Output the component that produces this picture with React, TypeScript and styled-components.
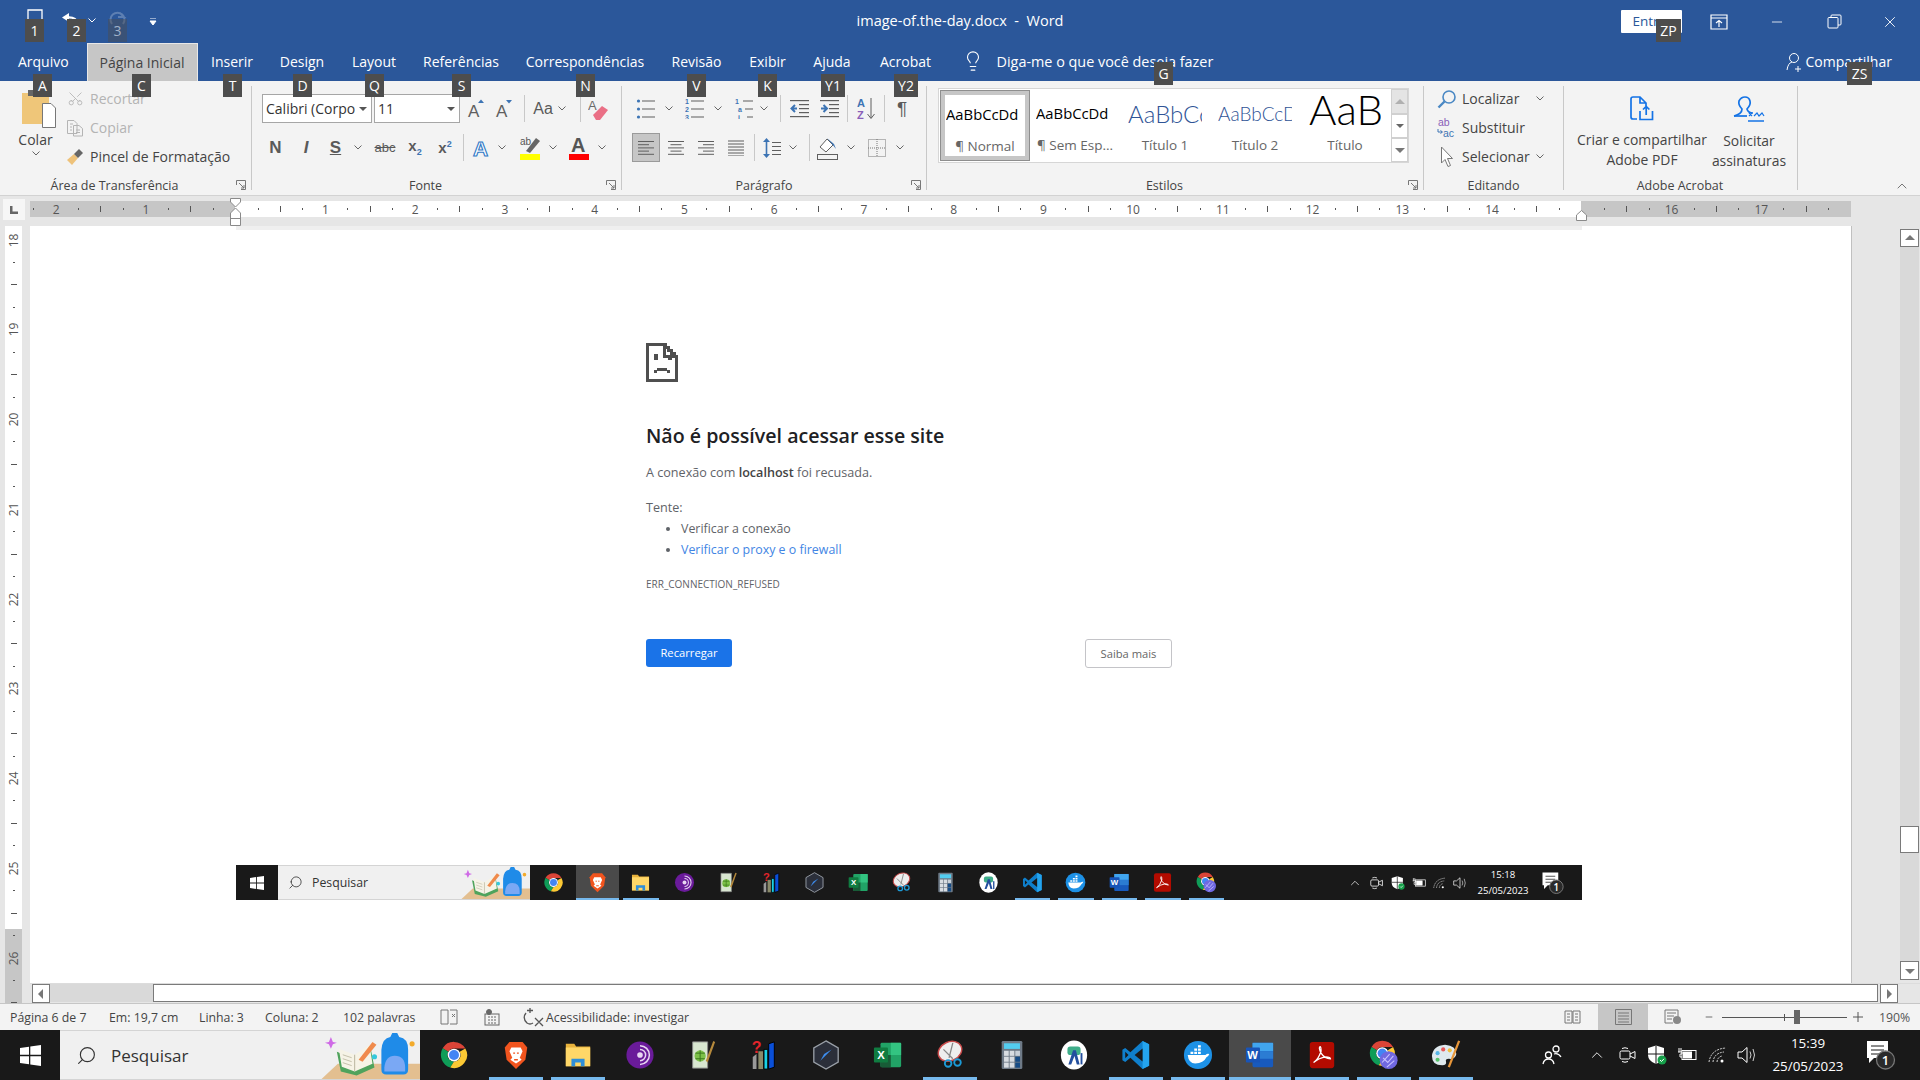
import React from 'react';
import styled, { createGlobalStyle } from 'styled-components';
import { Scissors, Lightbulb, Search, X, Minus, ChevronUp } from 'lucide-react';

const UI = '"Open Sans", "Noto Sans", "Liberation Sans", sans-serif';

const GlobalStyle = createGlobalStyle`
  html, body { margin: 0; padding: 0; width: 1920px; height: 1080px; overflow: hidden; background: #fff; }
  * { box-sizing: border-box; }
`;

const Window = styled.div`
  position: relative;
  width: 1920px;
  height: 1080px;
  display: flex;
  flex-direction: column;
  font-family: ${UI};
  color: #444;
  overflow: hidden;
`;

const TitleBar = styled.header`
  height: 43px;
  flex: none;
  background: #2b579a;
  display: grid;
  grid-template-columns: 1fr auto 1fr;
  align-items: center;
  color: #fff;
`;

const TitleText = styled.div`
  font-size: 14.5px;
  white-space: pre;
  margin-top: -2px;
`;

const BarSide = styled.div`
  display: flex;
  align-items: center;
  height: 100%;
`;

const QatIcon = styled.div<{ $lift: number }>`
  display: flex;
  margin-top: -${({ $lift }) => $lift}px;
`;

const EnterButton = styled.div`
  width: 61px;
  height: 23px;
  background: #fff;
  border-radius: 1px;
  color: #2b579a;
  font-size: 13.5px;
  padding-left: 11px;
  line-height: 23px;
`;

const TabsRow = styled.nav`
  height: 38px;
  flex: none;
  background: #2b579a;
  display: flex;
  align-items: stretch;
`;

const Tab = styled.div<{ $active?: boolean; $w: number }>`
  width: ${({ $w }) => $w}px;
  flex: none;
  display: flex;
  align-items: center;
  justify-content: center;
  font-size: 14px;
  padding-bottom: 1px;
  color: ${({ $active }) => ($active ? '#444' : '#fff')};
  background: ${({ $active }) => ($active ? '#c6c6c6' : 'transparent')};
  border: ${({ $active }) => ($active ? '1px solid #e8e8e8' : 'none')};
  border-bottom: none;
`;

const HelpBox = styled.div`
  display: flex;
  align-items: center;
  color: #fff;
  font-size: 14.4px;
  margin-left: 14px;
  gap: 13px;
  width: 760px;
  padding-bottom: 2px;
`;

const ShareBox = styled.div`
  display: flex;
  align-items: center;
  gap: 3px;
  color: #fff;
  font-size: 14px;
  margin-left: 64px;
  padding-bottom: 1px;
`;

const Ribbon = styled.section`
  height: 115px;
  flex: none;
  background: #f3f3f3;
  border-bottom: 1px solid #d2d2d2;
  display: flex;
  padding: 5px 0 0;
  position: relative;
`;

const Group = styled.div<{ $w: number; $plain?: boolean }>`
  width: ${({ $w }) => $w}px;
  flex: none;
  height: 104px;
  position: relative;
  border-right: ${({ $plain }) => ($plain ? 'none' : '1px solid #c8c8c8')};
`;

const GroupLabel = styled.div<{ $shift?: number }>`
  position: absolute;
  left: ${({ $shift }) => $shift ?? 0}px;
  right: 0;
  top: 92px;
  height: 16px;
  line-height: 16px;
  text-align: center;
  font-size: 12.5px;
  color: #444;
  white-space: nowrap;
`;

const Launcher = styled.svg`
  position: absolute;
  right: 5px;
  top: 94px;
`;

const ToolRow = styled.div<{ $top?: number }>`
  display: flex;
  align-items: center;
  height: 29px;
  margin-top: ${({ $top }) => $top ?? 0}px;
`;

const Slot = styled.div`
  flex: none;
  display: flex;
  align-items: center;
  justify-content: center;
  white-space: nowrap;
`;

const Sep = styled.div`
  width: 1px;
  height: 27px;
  background: #c8c8c8;
`;

const Glyph = styled.span<{ $size?: number; $bold?: boolean; $italic?: boolean; $under?: boolean; $strike?: boolean; $color?: string }>`
  font-family: "Liberation Sans", sans-serif;
  font-size: ${({ $size }) => $size ?? 16}px;
  font-weight: ${({ $bold }) => ($bold ? 700 : 400)};
  font-style: ${({ $italic }) => ($italic ? 'italic' : 'normal')};
  text-decoration: ${({ $under, $strike }) => ($under ? 'underline' : $strike ? 'line-through' : 'none')};
  color: ${({ $color }) => $color ?? '#5a5a5a'};
  line-height: 1;
`;

const SubMark = styled.sub`
  font-size: 9px;
  color: #3d74b4;
`;

const SupMark = styled.sup`
  font-size: 9px;
  color: #3d74b4;
`;

const ComboBox = styled.div<{ $w: number }>`
  width: 100%;
  height: 29px;
  background: #fff;
  border: 1px solid #a6a6a6;
  font-size: 14px;
  color: #333;
  padding: 0 4px 0 3px;
  display: flex;
  align-items: center;
  justify-content: space-between;
  overflow: hidden;
  span { overflow: hidden; width: ${({ $w }) => $w}px; white-space: nowrap; }
`;

const ActiveAlign = styled.div`
  width: 28px;
  height: 29px;
  background: #c6c6c6;
  border: 1px solid #9a9a9a;
  display: flex;
  align-items: center;
  justify-content: center;
`;

const SideRow = styled.div<{ $muted?: boolean }>`
  display: flex;
  align-items: center;
  height: 29px;
  gap: 5px;
  font-size: 14px;
  white-space: nowrap;
  color: ${({ $muted }) => ($muted ? '#b4b4b4' : '#444')};
`;

const IconCell = styled.div`
  width: 20px;
  display: flex;
  justify-content: center;
`;

const RotatedScissors = styled(Scissors)`
  transform: rotate(-90deg);
`;

const SideColumn = styled.div<{ $left: number }>`
  margin-left: ${({ $left }) => $left}px;
  margin-top: -2px;
`;

const PasteColumn = styled.div`
  width: 71px;
  margin-right: -6px;
  display: flex;
  flex-direction: column;
  align-items: center;
  font-size: 14px;
  padding-top: 3px;
  gap: 2px;
`;

const PasteArt = styled.div`
  display: flex;
  margin-left: 6px;
`;

const ClipboardBody = styled.div`
  display: flex;
`;

const SideText = styled.span<{ $w?: number }>`
  display: inline-block;
  width: ${({ $w }) => ($w ? `${$w}px` : 'auto')};
`;

const Gallery = styled.div`
  position: absolute;
  left: 11px;
  top: 2px;
  width: 471px;
  height: 75px;
  background: #fff;
  border: 1px solid #d6d6d6;
  display: flex;
  padding: 1px;
`;

const StyleItem = styled.div<{ $selected?: boolean }>`
  width: 90px;
  height: 71px;
  flex: none;
  display: flex;
  flex-direction: column;
  align-items: center;
  overflow: hidden;
  border: ${({ $selected }) => ($selected ? '1px solid #8e8e8e' : 'none')};
  outline: ${({ $selected }) => ($selected ? '4px solid #c6c6c6' : 'none')};
  outline-offset: -5px;
`;

const StylePreview = styled.div<{ $size: number; $color?: string; $light?: boolean; $w: number; $lift?: number }>`
  height: 46px;
  width: ${({ $w }) => $w}px;
  overflow: hidden;
  display: flex;
  align-items: center;
  white-space: nowrap;
  padding-bottom: ${({ $lift }) => $lift ?? 0}px;
  font-family: ${({ $light }) => ($light ? '"Lato", sans-serif' : '"Open Sans", sans-serif')};
  font-weight: ${({ $light }) => ($light ? 300 : 400)};
  font-size: ${({ $size }) => $size}px;
  color: ${({ $color }) => $color ?? '#000'};
`;

const StyleName = styled.div`
  font-size: 13.5px;
  line-height: 18px;
  color: #666;
  white-space: nowrap;
`;

const GalleryScroll = styled.div`
  margin-left: auto;
  width: 17px;
  display: flex;
  flex-direction: column;
  margin-top: -1px;
  margin-bottom: -1px;
  margin-right: -1px;
`;

const GalleryButton = styled.div<{ $h: number; $shade?: boolean }>`
  height: ${({ $h }) => $h}px;
  background: ${({ $shade }) => ($shade ? '#e4e4e4' : '#fff')};
  border: 1px solid #d0d0d0;
  display: flex;
  align-items: center;
  justify-content: center;
`;

const AcrobatBody = styled.div`
  display: flex;
`;

const AcrobatButton = styled.div<{ $w: number }>`
  width: ${({ $w }) => $w}px;
  flex: none;
  display: flex;
  flex-direction: column;
  align-items: center;
  padding-top: 10px;
  font-size: 13.9px;
  line-height: 20px;
  text-align: center;
  white-space: nowrap;
`;

const AcrobatLines = styled.div`
  margin-top: 9px;
`;

const Collapse = styled.div`
  position: absolute;
  right: 10px;
  bottom: 1px;
  color: #555;
  display: flex;
`;

const RulerRow = styled.div`
  height: 30px;
  flex: none;
  background: #e6e6e6;
  display: flex;
  padding-top: 5px;
  position: relative;
`;

const TabStop = styled.div`
  width: 22px;
  height: 21px;
  margin: -2px 5px 0 3px;
  background: #f6f6f6;
  display: flex;
  align-items: center;
  justify-content: center;
`;

const HRuler = styled.div`
  width: 1821px;
  height: 16px;
  overflow: hidden;
  display: flex;
  background: linear-gradient(to right, #c6c6c6 205px, #fff 205px, #fff 1551px, #c6c6c6 1551px);
`;

const RulerStrip = styled.div<{ $vertical?: boolean }>`
  display: flex;
  flex-direction: ${({ $vertical }) => ($vertical ? 'column' : 'row')};
  margin-left: ${({ $vertical }) => ($vertical ? 0 : -7.6)}px;
  margin-top: ${({ $vertical }) => ($vertical ? 2.8 : 0)}px;
`;

const RulerSlot = styled.div<{ $vertical?: boolean }>`
  flex: none;
  width: ${({ $vertical }) => ($vertical ? '17px' : '22.44px')};
  height: ${({ $vertical }) => ($vertical ? '22.44px' : '16px')};
  display: flex;
  align-items: center;
  justify-content: center;
  font-size: 12px;
  color: #555;
  font-family: "Open Sans", sans-serif;
`;

const RulerNumber = styled.span<{ $vertical?: boolean }>`
  display: inline-block;
  transform: ${({ $vertical }) => ($vertical ? 'rotate(-90deg)' : 'none')};
  white-space: nowrap;
`;

const RulerMark = styled.i<{ $long?: boolean; $vertical?: boolean }>`
  display: block;
  background: #555;
  width: ${({ $long, $vertical }) => ($vertical ? ($long ? 6 : 2) : 1)}px;
  height: ${({ $long, $vertical }) => ($vertical ? 1 : $long ? 6 : 2)}px;
`;

const MarginMarker = styled.svg<{ $left: number; $top: number }>`
  position: absolute;
  left: ${({ $left }) => $left}px;
  top: ${({ $top }) => $top}px;
`;

const DocRow = styled.div`
  flex: 1;
  min-height: 0;
  display: flex;
  background: #e6e6e6;
`;

const VRulerBand = styled.div`
  width: 30px;
  flex: none;
  padding-left: 5px;
`;

const VRuler = styled.div`
  width: 17px;
  height: 100%;
  overflow: hidden;
  background: linear-gradient(to bottom, #fff 703px, #c6c6c6 703px);
`;

const DocMain = styled.div`
  flex: 1;
  min-width: 0;
  display: flex;
  flex-direction: column;
`;

const DocTop = styled.div`
  flex: 1;
  min-height: 0;
  display: flex;
`;

const Page = styled.main`
  width: 1821px;
  flex: none;
  background: #fff;
  padding-left: 206px;
`;

const Picture = styled.div`
  width: 1346px;
  height: 100%;
  display: flex;
  flex-direction: column;
  justify-content: space-between;
  padding-bottom: 83px;
`;

const TopStrip = styled.div`
  height: 4px;
  background: #efefef;
`;

const ErrorBlock = styled.div`
  padding: 113px 0 0 410px;
  font-family: "Open Sans", sans-serif;
  color: #5f6368;
  svg { display: block; }
`;

const ErrorTitle = styled.h1`
  margin: 39px 0 0;
  font-size: 19.6px;
  line-height: 30px;
  font-weight: 600;
  color: #202124;
  white-space: nowrap;
`;

const ErrorText = styled.p<{ $top: number }>`
  margin: ${({ $top }) => $top}px 0 0;
  font-size: 12.6px;
  line-height: 18px;
  b { font-weight: 600; color: #444; }
`;

const ErrorList = styled.ul`
  margin: 3px 0 0;
  padding: 0 0 0 35px;
  font-size: 12.4px;
  line-height: 18px;
  li { margin-bottom: 3px; }
`;

const ErrorLink = styled.span`
  color: #4285e4;
`;

const ErrorCode = styled.div`
  margin-top: 18px;
  font-size: 10px;
  line-height: 14px;
`;

const ErrorButtons = styled.div`
  margin-top: 48px;
  width: 526px;
  display: flex;
  justify-content: space-between;
`;

const ReloadButton = styled.div`
  width: 86px;
  height: 28px;
  background: #1a73e8;
  border-radius: 3px;
  color: #fff;
  font-size: 11.2px;
  line-height: 27px;
  text-align: center;
`;

const MoreButton = styled.div`
  width: 87px;
  height: 29px;
  border: 1px solid #c4c4c8;
  border-radius: 3px;
  color: #666;
  font-size: 11.2px;
  line-height: 28px;
  text-align: center;
`;

const Side = styled.aside`
  flex: 1;
  border-left: 1px solid #c0c0c0;
  display: flex;
  justify-content: flex-end;
  padding: 3px 1px 3px 0;
`;

const VScroll = styled.div`
  width: 19px;
  display: flex;
  flex-direction: column;
  background: #d9d9d9;
`;

const ScrollButton = styled.div<{ $h: number; $w?: number }>`
  height: ${({ $h }) => $h}px;
  width: ${({ $w }) => ($w ? `${$w}px` : '100%')};
  flex: none;
  background: #fff;
  border: 1px solid #7a7a7a;
  display: flex;
  align-items: center;
  justify-content: center;
`;

const VTrack = styled.div`
  flex: 1;
  padding-top: 579px;
`;

const VThumb = styled.div`
  height: 27px;
  background: #fff;
  border: 1px solid #7a7a7a;
`;

const HScroll = styled.div`
  height: 20px;
  flex: none;
  display: flex;
  padding: 0 0 1px 2px;
  border-top: 1px solid #dcdcdc;
`;

const HTrack = styled.div`
  width: 103px;
  background: #d9d9d9;
`;

const HThumb = styled.div`
  width: 1725px;
  background: #fff;
  border: 1px solid #7a7a7a;
  margin-right: 2px;
`;

const StatusBar = styled.footer`
  height: 27px;
  flex: none;
  background: #f3f3f3;
  border-top: 1px solid #c6c6c6;
  display: flex;
  align-items: center;
  font-size: 12.3px;
  color: #444;
  position: relative;
  padding-left: 10px;
`;

const StatusItem = styled.div<{ $w: number }>`
  width: ${({ $w }) => $w}px;
  flex: none;
  white-space: nowrap;
  display: flex;
  align-items: center;
`;

const StatusRight = styled.div`
  margin-left: auto;
  display: flex;
  align-items: center;
  height: 100%;
  width: 370px;
`;

const ViewButton = styled.div<{ $w: number; $active?: boolean; $inset?: number }>`
  width: ${({ $w }) => $w}px;
  height: 100%;
  flex: none;
  display: flex;
  align-items: center;
  justify-content: center;
  padding-right: ${({ $inset }) => $inset ?? 0}px;
  background: ${({ $active }) => ($active ? '#c6c6c6' : 'transparent')};
`;

const ZoomTrack = styled.div`
  width: 125px;
  flex: none;
  height: 1px;
  background: #555;
  margin-left: 2px;
  margin-right: 5px;
  display: flex;
  align-items: center;
  padding-left: 62px;
`;

const ZoomTick = styled.i`
  display: block;
  width: 1px;
  height: 7px;
  background: #555;
  margin-right: 9px;
`;

const ZoomThumb = styled.i`
  display: block;
  width: 6px;
  height: 14px;
  background: #666;
`;

const ZoomPercent = styled.div`
  margin-left: 15px;
  color: #555;
`;

const Taskbar = styled.div<{ $h: number }>`
  height: ${({ $h }) => $h}px;
  flex: none;
  background: #191919;
  display: flex;
  align-items: stretch;
  position: relative;
`;

const StartCell = styled.div<{ $w: number }>`
  width: ${({ $w }) => $w}px;
  flex: none;
  display: flex;
  align-items: center;
  justify-content: center;
`;

const SearchField = styled.div<{ $w: number; $large?: boolean }>`
  width: ${({ $w }) => $w}px;
  flex: none;
  background: #f0f0f0;
  border-top: 1px solid #d4d4d4;
  border-bottom: 1px solid #d4d4d4;
  display: flex;
  align-items: center;
  color: #333;
  font-family: "Open Sans", sans-serif;
  font-size: ${({ $large }) => ($large ? 17 : 12.3)}px;
  padding-left: ${({ $large }) => ($large ? 16 : 10)}px;
  gap: ${({ $large }) => ($large ? 14 : 9)}px;
  overflow: hidden;
`;

const SearchGlass = styled(Search)`
  transform: scaleX(-1);
`;

const SearchArtWrap = styled.div`
  margin-left: auto;
  display: flex;
`;

const AppCell = styled.div<{ $w: number; $active?: boolean; $open?: boolean; $bar: number }>`
  width: ${({ $w }) => $w}px;
  flex: none;
  display: flex;
  align-items: center;
  justify-content: center;
  position: relative;
  background: ${({ $active }) => ($active ? '#4a4a4a' : 'transparent')};
  &::after {
    content: '';
    display: ${({ $open }) => ($open ? 'block' : 'none')};
    position: absolute;
    bottom: 0;
    left: ${({ $active }) => ($active ? 0 : '4px')};
    right: ${({ $active }) => ($active ? 0 : '4px')};
    height: ${({ $bar }) => $bar}px;
    background: #76b9ed;
  }
`;

const AppsGap = styled.div<{ $w: number }>`
  width: ${({ $w }) => $w}px;
  flex: none;
`;

const Tray = styled.div<{ $w: number }>`
  margin-left: auto;
  width: ${({ $w }) => $w}px;
  flex: none;
  display: flex;
  align-items: center;
  color: #fff;
`;

const Clock = styled.div<{ $size: number; $gap: number }>`
  text-align: center;
  color: #fff;
  font-family: "Open Sans", sans-serif;
  font-size: ${({ $size }) => $size}px;
  line-height: ${({ $gap }) => $gap}px;
  white-space: nowrap;
`;

const KeyTip = styled.div<{ $faded?: boolean }>`
  position: absolute;
  height: 23px;
  background: ${({ $faded }) => ($faded ? 'rgba(77,77,77,0.45)' : '#4d4d4d')};
  color: ${({ $faded }) => ($faded ? '#9fb0c8' : '#fff')};
  font-size: 14px;
  line-height: 23px;
  text-align: center;
  z-index: 5;
`;

const I = '#5f5f5f';
const B = '#3d74b4';

type Item = [number, number, React.ReactNode];

// puts items in a row by their centre, the row starts at origin
function strip(origin: number, items: Item[]) {
  let end = origin;
  return items.map(([c, w, node], i) => {
    const marginLeft = c - w / 2 - end;
    end = c + w / 2;
    return (
      <Slot key={i} style={{ width: w, marginLeft }}>
        {node}
      </Slot>
    );
  });
}

const Chev = ({ color = '#666' }: { color?: string }) => (
  <svg width="8" height="5" viewBox="0 0 8 5">
    <path d="M0.5 0.5 L4 4 L7.5 0.5" fill="none" stroke={color} strokeWidth="1" />
  </svg>
);

const Caret = ({ color = '#555' }: { color?: string }) => (
  <svg width="8" height="4" viewBox="0 0 8 4">
    <path d="M0 0 H8 L4 4 Z" fill={color} />
  </svg>
);

const LauncherIcon = () => (
  <Launcher width="10" height="10" viewBox="0 0 10 10">
    <path d="M0.5 5 V0.5 H9.5 V9.5 H5 M3 3 L8 8 M8 5 V8 H5" fill="none" stroke="#777" strokeWidth="1" />
  </Launcher>
);

const PasteIcon = () => (
  <svg width="34" height="39" viewBox="0 0 34 39">
    <rect x="0" y="4" width="27" height="31" fill="#efc679" />
    <rect x="6" y="1" width="15" height="6" fill="#666" />
    <path d="M20.5 14.5 H29 L33.5 19 V38.5 H20.5 Z" fill="#fff" stroke="#777" />
  </svg>
);

const CopyIcon = () => (
  <svg width="18" height="18" viewBox="0 0 18 18" fill="none" stroke="#b4b4b4">
    <path d="M1.5 1.5 H8 L11 4.5 V14.5 H1.5 Z M7.5 6.5 H13 L16.5 9.5 V17 H7.5 Z M4 5 H7 M4 8 H6 M4 11 H6 M10 11 H14 M10 13.5 H14" />
  </svg>
);

const BrushIcon = () => (
  <svg width="18" height="18" viewBox="0 0 18 18">
    <path d="M1 12 L8 6 L12 10 L6 17 Z" fill="#eec27a" />
    <path d="M8 6 L13 1 L17 5 L12 10 Z" fill="#666" />
  </svg>
);

const SizeA = ({ up }: { up: boolean }) => (
  <svg width="20" height="20" viewBox="0 0 20 20">
    <text x="1" y="18" fontFamily="Liberation Sans" fontSize="17" fill="#5f5f5f">A</text>
    <path d={up ? 'M11 4 L14 0.5 L17 4 Z' : 'M11 1 H17 L14 4.5 Z'} fill={B} />
  </svg>
);

const EraserIcon = () => (
  <svg width="22" height="24" viewBox="0 0 22 24">
    <text x="0" y="13" fontFamily="Liberation Sans" fontSize="13" fill="#6a6a6a">A</text>
    <path d="M5 18 L14 9 L20 13 L12 23 L8 23 Z" fill="#ea6f85" />
  </svg>
);

const TextEffect = () => (
  <svg width="22" height="22" viewBox="0 0 22 22">
    <text x="2" y="19" fontFamily="Liberation Sans" fontWeight="700" fontSize="21" fill="#fff" stroke="#2f79c6" strokeWidth="1.1">A</text>
  </svg>
);

const HighlightIcon = () => (
  <svg width="22" height="26" viewBox="0 0 22 26">
    <text x="1" y="10" fontFamily="Liberation Sans" fontSize="10" fill="#555">ab</text>
    <path d="M7 16 L17 3 L21 6 L11 18 Z" fill="#666" />
    <rect x="1" y="19" width="20" height="6" fill="#ffff00" />
  </svg>
);

const FontColor = () => (
  <svg width="22" height="26" viewBox="0 0 22 26">
    <text x="3" y="17" fontFamily="Liberation Sans" fontWeight="700" fontSize="20" fill="#555">A</text>
    <rect x="1" y="19" width="20" height="6" fill="#ff0000" />
  </svg>
);

const BulletList = ({ kind }: { kind: 0 | 1 | 2 }) => (
  <svg width="20" height="20" viewBox="0 0 20 20">
    {[2, 10, 18].map((y, i) => (
      <g key={y}>
        {kind === 0 ? (
          <circle cx="2.5" cy={y} r="1.6" fill={B} />
        ) : (
          <text x={i > 0 && kind === 2 ? 3 : 0} y={y + 2.5} fontSize="7" fontFamily="Liberation Sans" fontWeight="700" fill={B}>
            {kind === 1 ? i + 1 : ['1', 'a', 'i'][i]}
          </text>
        )}
        <rect x={kind === 2 ? 8 + i * 2 : 6} y={y - 0.5} width={kind === 2 ? 10 - i * 2 : 13} height="1" fill={I} />
      </g>
    ))}
  </svg>
);

const IndentIcon = ({ out }: { out: boolean }) => (
  <svg width="19" height="20" viewBox="0 0 19 20">
    {[1, 5, 9, 13, 17].map((y, i) => (
      <rect key={y} x={i === 0 || i === 4 ? 0 : 9} y={y} width={i === 0 || i === 4 ? 19 : 10} height="1.2" fill={I} />
    ))}
    <path d={out ? 'M7 9.5 H2 M5 6 L1.5 9.5 L5 13' : 'M1 9.5 H6 M3.5 6 L7 9.5 L3.5 13'} stroke={B} strokeWidth="2" fill="none" />
  </svg>
);

const SortIcon = () => (
  <svg width="20" height="24" viewBox="0 0 20 24">
    <text x="0" y="10" fontSize="11" fontWeight="700" fontFamily="Liberation Sans" fill={B}>A</text>
    <text x="0" y="22" fontSize="11" fontWeight="700" fontFamily="Liberation Sans" fill="#8a5fb8">Z</text>
    <path d="M14 1 V21 M10.5 17 L14 21.5 L17.5 17" fill="none" stroke={I} />
  </svg>
);

const AlignIcon = ({ kind }: { kind: 'l' | 'c' | 'r' | 'j' }) => {
  const widths = kind === 'j' ? [16, 16, 16, 16, 16, 16] : [16, 11, 16, 11, 16];
  return (
    <svg width="16" height="16" viewBox="0 0 16 16">
      {widths.map((w, i) => (
        <rect
          key={i}
          x={kind === 'l' || kind === 'j' ? 0 : kind === 'c' ? (16 - w) / 2 : 16 - w}
          y={kind === 'j' ? 0.5 + i * 3 : 1 + i * 3.2}
          width={w}
          height="1"
          fill={I}
        />
      ))}
    </svg>
  );
};

const SpacingIcon = () => (
  <svg width="18" height="22" viewBox="0 0 18 22">
    <path d="M3.5 1 L7 5 H0 Z M3.5 21 L0 17 H7 Z" fill={B} />
    <rect x="2.7" y="4" width="1.6" height="14" fill={B} />
    {[5, 9, 13, 17].map((y) => (
      <rect key={y} x="9" y={y} width="9" height="1" fill={I} />
    ))}
  </svg>
);

const ShadingIcon = () => (
  <svg width="22" height="24" viewBox="0 0 22 24">
    <path d="M3 11 L10 3 L16 9 L9 16 Z" fill="#fff" stroke={I} />
    <path d="M10 2 L17 8 L19 13 L15 8 Z" fill={B} />
    <rect x="0.5" y="18.5" width="20" height="5" fill="#f3f3f3" stroke={I} />
  </svg>
);

const BordersIcon = () => (
  <svg width="18" height="18" viewBox="0 0 18 18" fill="none" stroke="#777" strokeDasharray="1 1">
    <rect x="0.5" y="0.5" width="17" height="17" />
    <path d="M9 0 V18 M0 9 H18" />
  </svg>
);

const FindIcon = () => (
  <svg width="20" height="20" viewBox="0 0 20 20" fill="none">
    <circle cx="12" cy="8" r="6" stroke="#4a88c4" strokeWidth="1.6" />
    <path d="M7.5 12.5 L1.5 18.5" stroke="#4a88c4" strokeWidth="2.4" />
  </svg>
);

const ReplaceIcon = () => (
  <svg width="20" height="22" viewBox="0 0 20 22">
    <text x="1" y="9" fontSize="10.5" fontFamily="Liberation Sans" fill="#8a5fb8">ab</text>
    <text x="6" y="20" fontSize="10.5" fontFamily="Liberation Sans" fill={B}>ac</text>
    <path d="M1 12 V15 H5 M3.5 13.5 L5.5 15 L3.5 16.5" fill="none" stroke={B} />
  </svg>
);

const SelectIcon = () => (
  <svg width="14" height="22" viewBox="0 0 14 22">
    <path d="M1.5 1 V17 L5 13.5 L8 20.5 L10.5 19.5 L7.5 12.5 L12.5 12.5 Z" fill="#fff" stroke="#777" />
  </svg>
);

const PdfShareIcon = () => (
  <svg width="24" height="25" viewBox="0 0 24 25" fill="none" stroke="#1473e6" strokeWidth="1.7">
    <path d="M7 23 H3 Q1 23 1 21 V3 Q1 1 3 1 H10 L16 7 V10 M10 1 V7 H16" />
    <path d="M10 15 V23.5 H22.5 V15 M16.2 19 V10.5 M13 13.5 L16.2 10.5 L19.4 13.5" />
  </svg>
);

const SignIcon = () => (
  <svg width="32" height="26" viewBox="0 0 32 26" fill="none" stroke="#1473e6" strokeWidth="1.7">
    <path d="M1 20 Q9 18 9 13 Q5 9 6 5 Q8 1 12 1 Q16 1 17 5 Q18 9 14 13 Q15 17 20 17" />
    <path d="M1 20 H14" />
    <path d="M15 25 H31" strokeWidth="1.5" />
    <path d="M16 17 L19 20 M19 17 L16 20 M21 20 L24 17 L26 20 L29 17 L31 20" strokeWidth="1.2" />
  </svg>
);

const WinLogo = ({ size }: { size: number }) => (
  <svg width={size} height={size} viewBox="0 0 20 20" fill="#fff">
    <path d="M0 2.8 L8.6 1.6 V9.4 H0 Z M9.8 1.4 L20 0 V9.4 H9.8 Z M0 10.6 H8.6 V18.4 L0 17.2 Z M9.8 10.6 H20 V20 L9.8 18.6 Z" />
  </svg>
);

const SearchArt = ({ w }: { w: number }) => (
  <svg width={w} height={w / 2} viewBox="0 0 100 50">
    <path d="M17 34 H100 V50 H0 Z" fill="#e3bf90" />
    <path d="M16 22 L34 29 L50 18 L54 38 L36 46 L20 42 Z" fill="#4fa35c" />
    <path d="M18 19 L34 25 L49 15 L52 34 L34 42 L21 37 Z" fill="#f6f3e6" />
    <path d="M34 25 V42" stroke="#b8b49e" />
    <path d="M22 25 L31 28 M22 29 L31 32 M22 33 L31 36" stroke="#c4c0aa" />
    <path d="M38 30 L52 12 L56 15 L42 32 Z" fill="#f08a4b" />
    <path d="M61 20 Q62 8 70 7 L72 3 H77 L79 7 Q88 8 88 20 V40 Q88 45 83 45 H66 Q61 45 61 40 Z" fill="#1f8be8" />
    <path d="M64 38 Q65 26 74.5 26 Q85 26 85 38 V42 H64 Z" fill="#7aa8f4" />
    <path d="M10 7 L12 12 L16 13 L12 14.5 L10 19 L8 14.5 L4 13 L8 12 Z" fill="#cf6ae6" />
    <circle cx="92" cy="14" r="2.6" fill="#f3ab2c" />
    <circle cx="54" cy="27" r="2.6" fill="#35c8dc" />
  </svg>
);

const CHROME = (
  <>
    <path d="M16 2 A14 14 0 0 1 28.1 9 H16 A7 7 0 0 0 9.9 12.5 L3.9 8.9 A14 14 0 0 1 16 2 Z" fill="#db4437" />
    <path d="M3.9 8.9 L9.9 12.5 A7 7 0 0 0 16 23 L12 29.4 A14 14 0 0 1 3.9 8.9 Z" fill="#0f9d58" />
    <path d="M28.1 9 A14 14 0 0 1 12 29.4 L16 23 A7 7 0 0 0 22.1 12.5 Z" fill="#fcc934" />
    <circle cx="16" cy="16" r="6.8" fill="#fff" />
    <circle cx="16" cy="16" r="5.3" fill="#4285f4" />
  </>
);

const apps: Record<string, React.ReactNode> = {
  chrome: CHROME,
  brave: (
    <>
      <path d="M9 2 H23 L28 8 L26 21 L16 31 L6 21 L4 8 Z" fill="#f1541e" />
      <path d="M11 8 H21 L23 12 L20 19 L22 21 L16 25 L10 21 L12 19 L9 12 Z" fill="#fff" />
      <path d="M13 14 H15 M17 14 H19 M14 21 H18" stroke="#f1541e" strokeWidth="1.5" />
    </>
  ),
  explorer: (
    <>
      <path d="M3 4 H12 L14 7 H29 V28 H3 Z" fill="#e8b23c" />
      <rect x="3" y="8" width="26" height="20" fill="#ffd768" />
      <path d="M9 28 V20 H23 V28 H19 V24 H13 V28 Z" fill="#2f8fd8" />
    </>
  ),
  tor: (
    <>
      <circle cx="16" cy="16" r="14.5" fill="#6a1b9a" />
      <path d="M16 6 A10 10 0 0 1 16 26 M16 10 A6 6 0 0 1 16 22" stroke="#e8d6f2" strokeWidth="1.6" fill="none" />
      <circle cx="16" cy="16" r="3" fill="#e8d6f2" />
    </>
  ),
  notepad: (
    <>
      <path d="M6 2 H22 V30 H6 Z" fill="#d8e6d0" stroke="#888" />
      <circle cx="14" cy="17" r="6" fill="#7cc048" />
      <path d="M9 14 H19 M9 20 H19 M14 11 V23" stroke="#38751a" />
      <path d="M20 22 L28 1 L30 2 L22 24 Z" fill="#b68a3c" />
    </>
  ),
  book: (
    <>
      <text x="3" y="14" fontSize="17" fontWeight="700" fill="#e3242b" fontFamily="Liberation Sans">?</text>
      <path d="M4 31 V18 L8 15 V31 Z" fill="#999" />
      <path d="M10 31 V12 H15 V31 Z" fill="#8a8a6a" />
      <path d="M16 31 V10 H20 V31 Z" fill="#18d2e6" stroke="#000" />
      <path d="M21 31 V4 L27 2 V29 Z" fill="#0a4fd8" stroke="#000" />
    </>
  ),
  hex: (
    <>
      <path d="M16 1 L29 8.5 V23.5 L16 31 L3 23.5 V8.5 Z" fill="#2b2f3a" stroke="#9aa0a8" strokeWidth="1.4" />
      <path d="M22 10 L10 22 L14 15 Z" fill="#3d8df0" />
    </>
  ),
  excel: (
    <>
      <rect x="8" y="3" width="22" height="26" rx="1.5" fill="#21a366" />
      <path d="M19 3 H30 V16 H19 Z" fill="#33c481" />
      <path d="M8 16 H19 V29 H8 Z" fill="#185c37" />
      <rect x="1" y="8" width="15" height="16" rx="1" fill="#107c41" />
      <text x="4.5" y="20.5" fontSize="12" fontWeight="700" fill="#fff" fontFamily="Liberation Sans">X</text>
    </>
  ),
  snip: (
    <>
      <ellipse cx="16" cy="12" rx="13" ry="10" fill="#eee" stroke="#c84a4a" strokeWidth="1.5" transform="rotate(-25 16 12)" />
      <path d="M19 3 L15 19 M9 10 L19 20" stroke="#888" strokeWidth="1.4" />
      <circle cx="14" cy="25" r="3.5" fill="none" stroke="#1c9ad6" strokeWidth="2" />
      <circle cx="24" cy="24" r="3.5" fill="none" stroke="#1c9ad6" strokeWidth="2" />
    </>
  ),
  calc: (
    <>
      <rect x="5" y="1" width="22" height="30" rx="1.5" fill="#6e7a87" />
      <rect x="7.5" y="3.5" width="17" height="6" fill="#53cdf0" />
      {[0, 1, 2].map((r) =>
        [0, 1, 2].map((c) => (
          <rect key={`${r}${c}`} x={7.5 + c * 6} y={11.5 + r * 6.3} width="5" height="5.4" fill={c === 2 ? (r === 0 ? '#c8d0d8' : '#164c86') : '#d8dde2'} />
        )),
      )}
    </>
  ),
  ai: (
    <>
      <ellipse cx="16" cy="16" rx="14" ry="15.5" fill="#fff" />
      <rect x="9" y="7" width="14" height="9" rx="3" fill="#3fae8a" />
      <path d="M10 26 L15 11 H18 L22 26 H19 L16.5 17 L13 26 Z" fill="#234f9e" />
      <rect x="23" y="14" width="2" height="12" fill="#234f9e" />
    </>
  ),
  vscode: (
    <>
      <path d="M23 1 L30 4.5 V27.5 L23 31 L10 19 L4.5 23.5 L1.5 21.5 V10.5 L4.5 8.5 L10 13 Z" fill="#0f7fcc" />
      <path d="M23 1 L30 4.5 V27.5 L23 31 Z" fill="#24a4ee" />
      <path d="M23 9 L14.5 16 L23 23 Z" fill="#191919" />
      <path d="M4.5 12.5 L8 16 L4.5 19.5 Z" fill="#191919" />
    </>
  ),
  docker: (
    <>
      <circle cx="16" cy="16" r="15" fill="#1d91e6" />
      <path d="M5 16 H24 Q26 14 28 15 Q27 18 25 18.5 Q22 25 13 25 Q6 25 5 16 Z" fill="#fff" />
      <path d="M8 12.5 H11 V15 H8 Z M12 12.5 H15 V15 H12 Z M16 12.5 H19 V15 H16 Z M12 9 H15 V11.5 H12 Z M16 9 H19 V11.5 H16 Z M16 5.5 H19 V8 H16 Z" fill="#fff" />
    </>
  ),
  word: (
    <>
      <rect x="8" y="3" width="22" height="26" rx="1.5" fill="#185abd" />
      <rect x="8" y="3" width="22" height="9" fill="#41a5ee" />
      <rect x="8" y="12" width="22" height="8" fill="#2b7cd3" />
      <rect x="1" y="8" width="15" height="16" rx="1" fill="#1854b8" />
      <text x="2.5" y="20.5" fontSize="12" fontWeight="700" fill="#fff" fontFamily="Liberation Sans">W</text>
    </>
  ),
  pdf: (
    <>
      <rect x="3" y="2" width="26" height="28" rx="3" fill="#b30b00" />
      <path d="M7 24 Q12 21 15 12 Q15 7 14 7 Q12 8 15 14 Q19 20 25 20 Q25 18 20 18 Q13 19 7 24 Z" fill="none" stroke="#fff" strokeWidth="1.4" />
    </>
  ),
  canary: (
    <>
      <g transform="translate(-1 -1) scale(0.95)">{CHROME}</g>
      <circle cx="21" cy="21.5" r="9.5" fill="#7068e0" />
      <path d="M15 19 L20 24 L26 17 M14 24 L22 15 M19 29 L27 22" stroke="#c8c0ff" strokeWidth="1.2" fill="none" />
    </>
  ),
  paint: (
    <>
      <path d="M15 5 Q2 6 1 17 Q1 27 12 27 Q17 27 16 23 Q15 20 19 20 Q26 21 27 15 Q27 6 15 5 Z" fill="#dfe9ee" />
      <circle cx="7" cy="14" r="2.2" fill="#58b6e8" />
      <circle cx="13" cy="10" r="2.2" fill="#e85a5a" />
      <circle cx="7" cy="21" r="2.2" fill="#57c46a" />
      <circle cx="20" cy="11" r="2.2" fill="#f0c040" />
      <path d="M30 1 L19 29" stroke="#e8973a" strokeWidth="2.4" />
    </>
  ),
};

const AppIcon = ({ name, size }: { name: string; size: number }) => (
  <svg width={size} height={size} viewBox="0 0 32 32">
    {apps[name]}
  </svg>
);

const APP_NAMES = ['chrome', 'brave', 'explorer', 'tor', 'notepad', 'book', 'hex', 'excel', 'snip', 'calc', 'ai', 'vscode', 'docker', 'word', 'pdf', 'canary'];

const PeopleIcon = () => (
  <svg width="20" height="20" viewBox="0 0 20 20" fill="none" stroke="#fff" strokeWidth="1.3">
    <circle cx="6.5" cy="10" r="3" />
    <path d="M1 19 Q2 14 6.5 14 Q11 14 12 19" />
    <circle cx="14" cy="4" r="3" />
    <path d="M12 9 Q16 7.5 19 12" />
  </svg>
);

const MeetIcon = ({ size }: { size: number }) => (
  <svg width={size} height={size} viewBox="0 0 18 18" fill="none" stroke="#fff">
    <rect x="1" y="5" width="10" height="8" rx="1.5" />
    <path d="M11 8 L16 5.5 V12.5 L11 10 M3 2.5 Q6 1 9 2.5 M3 15.5 Q6 17 9 15.5" />
  </svg>
);

const ShieldIcon = ({ size }: { size: number }) => (
  <svg width={size} height={size} viewBox="0 0 20 20">
    <path d="M9 0.5 L17 3 V10 Q17 16 9 19 Q1 16 1 10 V3 Z" fill="#fff" />
    <path d="M9 0.5 V19 M1 9 H17" stroke="#191919" />
    <circle cx="15" cy="15" r="4.5" fill="#16a04a" />
    <path d="M13 15 L14.5 16.5 L17 13.8" stroke="#fff" fill="none" />
  </svg>
);

const BatteryIcon = ({ size }: { size: number }) => (
  <svg width={size} height={size} viewBox="0 0 20 20" fill="none" stroke="#fff">
    <rect x="5" y="5.5" width="14" height="9" />
    <rect x="6.5" y="7" width="8" height="6" fill="#fff" />
    <path d="M2 3 V7 M4 3 V7 M1 7 H5 V9 H3 V12 H5" />
  </svg>
);

const WifiIcon = ({ size }: { size: number }) => (
  <svg width={size} height={size} viewBox="0 0 20 20" fill="none" stroke="#fff">
    <path d="M1 17 Q3 4 18 3 M5 17 Q6 8 16 7 M9 17 Q9.5 12 14 11" strokeDasharray="2 1" opacity="0.8" />
    <circle cx="14" cy="16" r="1.5" fill="#fff" stroke="none" />
  </svg>
);

const VolumeIcon = ({ size }: { size: number }) => (
  <svg width={size} height={size} viewBox="0 0 20 20" fill="none" stroke="#fff">
    <path d="M1 7 H5 L10 2.5 V17.5 L5 13 H1 Z" />
    <path d="M13 6.5 Q15 10 13 13.5 M16 4 Q19 10 16 16" opacity="0.8" />
  </svg>
);

const NotifyIcon = ({ size }: { size: number }) => (
  <svg width={size} height={size} viewBox="0 0 32 32">
    <path d="M2 2 H23 V19 H9 L4 24 V19 H2 Z" fill="#fff" />
    <path d="M6 7 H19 M6 11 H19 M6 15 H15" stroke="#191919" />
    <circle cx="20.5" cy="21" r="9" fill="#2a2a2a" stroke="#777" strokeWidth="1.3" />
    <text x="20.5" y="26" textAnchor="middle" fontSize="13" fontFamily="Open Sans" fontWeight="600" fill="#fff">1</text>
  </svg>
);

const SadDoc = () => (
  <svg width="32" height="39" viewBox="0 0 32 39" shapeRendering="crispEdges">
    <path d="M1.5 1.5 H19 V4 H22 V7 H25 V10 H28 V13 H30.5 V37.5 H1.5 Z" fill="#fff" stroke="#4f4f4f" strokeWidth="3" />
    <path d="M18 2 V13 H30" fill="none" stroke="#4f4f4f" strokeWidth="3" />
    <rect x="8" y="11" width="4" height="6" fill="#4f4f4f" />
    <rect x="22" y="14" width="4" height="3" fill="#4f4f4f" />
    <path d="M8 30 V27 H11 V25 H21 V27 H24 V30 H21 V28 H11 V30 Z" fill="#4f4f4f" />
  </svg>
);

const ArrowSmall = ({ dir, color = '#777' }: { dir: 'u' | 'd' | 'l' | 'r'; color?: string }) => {
  const d = { u: 'M1 8 L6 3 L11 8 Z', d: 'M1 4 L6 9 L11 4 Z', l: 'M8 1 L3 6 L8 11 Z', r: 'M4 1 L9 6 L4 11 Z' }[dir];
  return (
    <svg width="12" height="12" viewBox="0 0 12 12">
      <path d={d} fill={color} />
    </svg>
  );
};

const TABS: [string, number][] = [
  ['Arquivo', 86.5],
  ['Página Inicial', 111],
  ['Inserir', 69],
  ['Design', 71],
  ['Layout', 73],
  ['Referências', 101],
  ['Correspondências', 147],
  ['Revisão', 76],
  ['Exibir', 66],
  ['Ajuda', 63],
  ['Acrobat', 84],
];

const TIPS: [string, number, number, number, boolean?][] = [
  ['1', 25, 19, 19],
  ['2', 67, 19, 19],
  ['3', 108, 19, 19, true],
  ['A', 33, 74, 19],
  ['C', 132, 74, 19],
  ['T', 223, 74, 19],
  ['D', 293, 74, 19],
  ['Q', 365, 74, 19],
  ['S', 452, 74, 19],
  ['N', 576, 74, 19],
  ['V', 687, 74, 19],
  ['K', 758, 74, 19],
  ['Y1', 821, 74, 24],
  ['Y2', 894, 74, 24],
  ['G', 1154, 62, 19],
  ['ZP', 1656, 19, 25],
  ['ZS', 1847, 62, 25],
];

function rulerSlots(first: number, count: number, vertical: boolean) {
  const out: React.ReactNode[] = [];
  for (let i = 0; i < count; i++) {
    const q = first + i;
    const mod = ((q % 4) + 4) % 4;
    let inner: React.ReactNode = null;
    if (mod === 0 && q !== 0) {
      const n = Math.abs(q / 4);
      inner = !vertical && n === 15 ? null : <RulerNumber $vertical={vertical}>{n}</RulerNumber>;
    } else if (mod === 2) {
      inner = <RulerMark $long $vertical={vertical} />;
    } else if (mod !== 0) {
      inner = <RulerMark $vertical={vertical} />;
    }
    out.push(
      <RulerSlot key={i} $vertical={vertical}>
        {inner}
      </RulerSlot>,
    );
  }
  return out;
}

function InnerTaskbar() {
  return (
    <Taskbar $h={35}>
      <StartCell $w={42}>
        <WinLogo size={14} />
      </StartCell>
      <SearchField $w={252}>
        <SearchGlass size={15} color="#333" strokeWidth={1.3} />
        Pesquisar
        <SearchArtWrap>
          <SearchArt w={69} />
        </SearchArtWrap>
      </SearchField>
      <AppsGap $w={2} />
      {APP_NAMES.map((name) => (
        <AppCell
          key={name}
          $w={43.5}
          $bar={2}
          $active={name === 'brave'}
          $open={['brave', 'explorer', 'vscode', 'docker', 'word', 'pdf', 'canary'].includes(name)}
        >
          <AppIcon name={name} size={21} />
        </AppCell>
      ))}
      <Tray $w={242}>
        {strip(1340, [
          [1355, 14, <ChevronUp key="u" size={16} strokeWidth={1.2} />],
          [1377, 14, <MeetIcon key="m" size={14} />],
          [1398, 14, <ShieldIcon key="s" size={14} />],
          [1419, 14, <BatteryIcon key="b" size={14} />],
          [1440, 14, <WifiIcon key="w" size={14} />],
          [1460, 14, <VolumeIcon key="v" size={14} />],
          [1503, 62, <Clock key="c" $size={9.6} $gap={16}>15:18<br />25/05/2023</Clock>],
          [1553, 24, <NotifyIcon key="n" size={24} />],
        ])}
      </Tray>
    </Taskbar>
  );
}

export default function App() {
  return (
    <Window>
      <GlobalStyle />
      <TitleBar>
        <BarSide>
          {strip(0, [
            [35, 16, <QatIcon key="s" $lift={9}><svg width="16" height="16" viewBox="0 0 16 16"><path d="M1 1 H15 V15 H1 Z" fill="none" stroke="#fff" strokeWidth="1.3" /></svg></QatIcon>],
            [70, 18, <QatIcon key="u" $lift={6}><svg width="18" height="12" viewBox="0 0 18 12"><path d="M17 11 Q15 4 7 4.5" fill="none" stroke="#fff" strokeWidth="2.2" /><path d="M8 0 L1 4.5 L8 9 Z" fill="#fff" /></svg></QatIcon>],
            [92, 8, <QatIcon key="c" $lift={3}><Chev color="#fff" /></QatIcon>],
            [118, 18, <QatIcon key="r" $lift={3}><svg width="18" height="18" viewBox="0 0 18 18"><path d="M3 13 A7 7 0 1 1 14 13 M11 2 L15 6 L9 6" fill="none" stroke="#5d7fb2" strokeWidth="2" /></svg></QatIcon>],
            [153, 8, <svg key="q" width="8" height="8" viewBox="0 0 8 8"><path d="M1 0 H7 M1 3 H7 L4 7 Z" stroke="#fff" fill="#fff" /></svg>],
          ])}
        </BarSide>
        <TitleText>image-of.the-day.docx  -  Word</TitleText>
        <BarSide>
          {strip(1063, [
            [1651.5, 61, <EnterButton key="e">Entrar</EnterButton>],
            [1719, 18, <svg key="d" width="18" height="16" viewBox="0 0 18 16"><path d="M1 1 H17 V15 H1 Z M1 4 H17 M9 13 V6.5 M6 9 L9 6.5 L12 9" fill="none" stroke="#fff" strokeWidth="1.2" /></svg>],
            [1777, 16, <Minus key="m" size={16} color="#fff" strokeWidth={1.2} />],
            [1834, 16, <svg key="w" width="15" height="15" viewBox="0 0 15 15"><path d="M1 4.5 Q1 3.5 2 3.5 H10 Q11 3.5 11 4.5 V13 Q11 14 10 14 H2 Q1 14 1 13 Z M4 3.5 V2 Q4 1 5 1 H13 Q14 1 14 2 V10 Q14 11 13 11 H11" fill="none" stroke="#fff" /></svg>],
            [1890, 18, <X key="x" size={20} color="#fff" strokeWidth={1.2} />],
          ])}
        </BarSide>
      </TitleBar>

      <TabsRow>
        {TABS.map(([label, w]) => (
          <Tab key={label} $w={w} $active={label === 'Página Inicial'}>
            {label}
          </Tab>
        ))}
        <HelpBox>
          <Lightbulb size={22} strokeWidth={1.2} />
          Diga-me o que você deseja fazer
        </HelpBox>
        <ShareBox>
          <svg width="17" height="20" viewBox="0 0 17 20" fill="none" stroke="#fff"><circle cx="8" cy="6" r="4.5" /><path d="M1 18 Q2 11 6 10 M12 14 V20 M9 17 H15" /></svg>
          Compartilhar
        </ShareBox>
      </TabsRow>

      <Ribbon>
        <Group $w={252}>
          <ClipboardBody>
            <PasteColumn>
              <PasteArt><PasteIcon /></PasteArt>
              Colar
              <Chev />
            </PasteColumn>
            <SideColumn $left={0}>
              <SideRow $muted>
                <IconCell><RotatedScissors size={17} strokeWidth={1.2} color="#b4b4b4" /></IconCell>
                Recortar
              </SideRow>
              <SideRow $muted>
                <IconCell><CopyIcon /></IconCell>
                Copiar
              </SideRow>
              <SideRow>
                <IconCell><BrushIcon /></IconCell>
                Pincel de Formatação
              </SideRow>
            </SideColumn>
          </ClipboardBody>
          <GroupLabel $shift={-22}>Área de Transferência</GroupLabel>
          <LauncherIcon />
        </Group>

        <Group $w={370}>
          <ToolRow $top={8}>
            {strip(252, [
              [317, 110, <ComboBox key="f" $w={89}><span>Calibri (Corpo)</span><Caret /></ComboBox>],
              [417, 86, <ComboBox key="s" $w={60}><span>11</span><Caret /></ComboBox>],
              [477, 20, <SizeA key="g" up />],
              [505, 20, <SizeA key="h" up={false} />],
              [524.5, 1, <Sep key="a" />],
              [543, 20, <Glyph key="b" $size={16}>Aa</Glyph>],
              [562, 8, <Chev key="c" />],
              [580, 1, <Sep key="d" />],
              [599, 22, <EraserIcon key="e" />],
            ])}
          </ToolRow>
          <ToolRow $top={10}>
            {strip(252, [
              [275.5, 20, <Glyph key="n" $bold $size={17}>N</Glyph>],
              [306, 20, <Glyph key="i" $italic $bold $size={17}>I</Glyph>],
              [335.5, 20, <Glyph key="s" $bold $under $size={17}>S</Glyph>],
              [358, 8, <Chev key="c" />],
              [385, 24, <Glyph key="x" $strike $size={13}>abc</Glyph>],
              [415, 20, <Glyph key="y" $bold $size={15}>x<SubMark>2</SubMark></Glyph>],
              [445, 20, <Glyph key="z" $bold $size={15}>x<SupMark>2</SupMark></Glyph>],
              [463, 1, <Sep key="a" />],
              [482, 22, <TextEffect key="t" />],
              [502, 8, <Chev key="d" />],
              [530, 22, <HighlightIcon key="h" />],
              [553, 8, <Chev key="e" />],
              [579, 22, <FontColor key="f" />],
              [602, 8, <Chev key="g" />],
            ])}
          </ToolRow>
          <GroupLabel $shift={-22}>Fonte</GroupLabel>
          <LauncherIcon />
        </Group>

        <Group $w={305}>
          <ToolRow $top={8}>
            {strip(622, [
              [646, 20, <BulletList key="a" kind={0} />],
              [669, 8, <Chev key="b" />],
              [695, 20, <BulletList key="c" kind={1} />],
              [718, 8, <Chev key="d" />],
              [744.5, 20, <BulletList key="e" kind={2} />],
              [764, 8, <Chev key="f" />],
              [780, 1, <Sep key="g" />],
              [799, 19, <IndentIcon key="h" out />],
              [829, 19, <IndentIcon key="i" out={false} />],
              [847, 1, <Sep key="j" />],
              [867, 20, <SortIcon key="k" />],
              [884.5, 1, <Sep key="l" />],
              [902, 14, <Glyph key="m" $size={19}>¶</Glyph>],
            ])}
          </ToolRow>
          <ToolRow $top={10}>
            {strip(622, [
              [646, 28, <ActiveAlign key="a"><AlignIcon kind="l" /></ActiveAlign>],
              [676, 16, <AlignIcon key="b" kind="c" />],
              [706, 16, <AlignIcon key="c" kind="r" />],
              [736, 16, <AlignIcon key="d" kind="j" />],
              [754, 1, <Sep key="e" />],
              [772, 18, <SpacingIcon key="f" />],
              [793, 8, <Chev key="g" />],
              [809, 1, <Sep key="h" />],
              [828, 22, <ShadingIcon key="i" />],
              [851, 8, <Chev key="j" />],
              [877, 18, <BordersIcon key="k" />],
              [900, 8, <Chev key="l" />],
            ])}
          </ToolRow>
          <GroupLabel $shift={-20}>Parágrafo</GroupLabel>
          <LauncherIcon />
        </Group>

        <Group $w={497}>
          <Gallery>
            <StyleItem $selected>
              <StylePreview $size={14.8} $w={78}>AaBbCcDd</StylePreview>
              <StyleName>¶ Normal</StyleName>
            </StyleItem>
            <StyleItem>
              <StylePreview $size={14.8} $w={78}>AaBbCcDd</StylePreview>
              <StyleName>¶ Sem Esp...</StyleName>
            </StyleItem>
            <StyleItem>
              <StylePreview $size={24} $w={74} $color="#2f5496" $light>AaBbCcDd</StylePreview>
              <StyleName>Título 1</StyleName>
            </StyleItem>
            <StyleItem>
              <StylePreview $size={19} $w={74} $color="#2f5496" $light>AaBbCcDd</StylePreview>
              <StyleName>Título 2</StyleName>
            </StyleItem>
            <StyleItem>
              <StylePreview $size={42} $w={72} $light $lift={9}>AaB</StylePreview>
              <StyleName>Título</StyleName>
            </StyleItem>
            <GalleryScroll>
              <GalleryButton $h={26} $shade><ArrowSmall dir="u" color="#b0b0b0" /></GalleryButton>
              <GalleryButton $h={24}><Caret color="#666" /></GalleryButton>
              <GalleryButton $h={25}><ArrowSmall dir="d" /></GalleryButton>
            </GalleryScroll>
          </Gallery>
          <GroupLabel $shift={-21}>Estilos</GroupLabel>
          <LauncherIcon />
        </Group>

        <Group $w={140}>
          <SideColumn $left={13}>
            <SideRow>
              <IconCell><FindIcon /></IconCell>
              <SideText $w={69}>Localizar</SideText>
              <Chev />
            </SideRow>
            <SideRow>
              <IconCell><ReplaceIcon /></IconCell>
              Substituir
            </SideRow>
            <SideRow>
              <IconCell><SelectIcon /></IconCell>
              <SideText $w={69}>Selecionar</SideText>
              <Chev />
            </SideRow>
          </SideColumn>
          <GroupLabel>Editando</GroupLabel>
        </Group>

        <Group $w={234}>
          <AcrobatBody>
            <AcrobatButton $w={156}>
              <PdfShareIcon />
              <AcrobatLines>Criar e compartilhar<br />Adobe PDF</AcrobatLines>
            </AcrobatButton>
            <AcrobatButton $w={58}>
              <SignIcon />
              <AcrobatLines>Solicitar<br />assinaturas</AcrobatLines>
            </AcrobatButton>
          </AcrobatBody>
          <GroupLabel $shift={-1}>Adobe Acrobat</GroupLabel>
        </Group>
        <Collapse><ChevronUp size={16} strokeWidth={1.2} /></Collapse>
      </Ribbon>

      <RulerRow>
        <TabStop>
          <svg width="10" height="10" viewBox="0 0 10 10"><path d="M1 1 V9 H9 V6.5 H3.5 V1 Z" fill="#666" /></svg>
        </TabStop>
        <HRuler>
          <RulerStrip>{rulerSlots(-9, 81, false)}</RulerStrip>
        </HRuler>
        <MarginMarker $left={230} $top={2} width="11" height="28" viewBox="0 0 11 28">
          <path d="M0.5 0.5 H10.5 V4 L5.5 9 L0.5 4 Z M5.5 10 L10.5 15 V27.5 H0.5 V15 Z M0.5 20.5 H10.5" fill="#fff" stroke="#8a8a8a" />
        </MarginMarker>
        <MarginMarker $left={1576} $top={14} width="11" height="11" viewBox="0 0 11 11">
          <path d="M5.5 0.5 L10.5 5 V10.5 H0.5 V5 Z" fill="#fff" stroke="#8a8a8a" />
        </MarginMarker>
      </RulerRow>

      <DocRow>
        <VRulerBand>
          <VRuler>
            <RulerStrip $vertical>{rulerSlots(72, 35, true)}</RulerStrip>
          </VRuler>
        </VRulerBand>
        <DocMain>
          <DocTop>
            <Page>
              <Picture>
                <div>
                  <TopStrip />
                  <ErrorBlock>
                    <SadDoc />
                    <ErrorTitle>Não é possível acessar esse site</ErrorTitle>
                    <ErrorText $top={13}>A conexão com <b>localhost</b> foi recusada.</ErrorText>
                    <ErrorText $top={17}>Tente:</ErrorText>
                    <ErrorList>
                      <li>Verificar a conexão</li>
                      <li><ErrorLink>Verificar o proxy e o firewall</ErrorLink></li>
                    </ErrorList>
                    <ErrorCode>ERR_CONNECTION_REFUSED</ErrorCode>
                    <ErrorButtons>
                      <ReloadButton>Recarregar</ReloadButton>
                      <MoreButton>Saiba mais</MoreButton>
                    </ErrorButtons>
                  </ErrorBlock>
                </div>
                <InnerTaskbar />
              </Picture>
            </Page>
            <Side>
              <VScroll>
                <ScrollButton $h={18}><ArrowSmall dir="u" /></ScrollButton>
                <VTrack><VThumb /></VTrack>
                <ScrollButton $h={19}><ArrowSmall dir="d" /></ScrollButton>
              </VScroll>
            </Side>
          </DocTop>
          <HScroll>
            <ScrollButton $h={19} $w={18}><ArrowSmall dir="l" /></ScrollButton>
            <HTrack />
            <HThumb />
            <ScrollButton $h={19} $w={18}><ArrowSmall dir="r" /></ScrollButton>
          </HScroll>
        </DocMain>
      </DocRow>

      <StatusBar>
        <StatusItem $w={99}>Página 6 de 7</StatusItem>
        <StatusItem $w={90}>Em: 19,7 cm</StatusItem>
        <StatusItem $w={66}>Linha: 3</StatusItem>
        <StatusItem $w={78}>Coluna: 2</StatusItem>
        <StatusItem $w={97}>102 palavras</StatusItem>
        <StatusItem $w={44}>
          <svg width="18" height="16" viewBox="0 0 18 16" fill="none" stroke="#777"><path d="M1 1 H8 V15 H1 Z M10 1 H17 V15 H10 M12 5 L15 8 M15 5 L12 8" /></svg>
        </StatusItem>
        <StatusItem $w={38}>
          <svg width="16" height="17" viewBox="0 0 16 17" fill="none" stroke="#666"><rect x="1" y="5" width="14" height="11" /><circle cx="5" cy="3" r="2.5" fill="#666" /><path d="M4 8 H12 M4 11 H12 M4 14 H12" strokeDasharray="2 1" /></svg>
        </StatusItem>
        <StatusItem $w={170}>
          <svg width="24" height="20" viewBox="0 0 24 20" fill="none" stroke="#555"><path d="M8 1 V6 M5 3.5 H11 M4 6 Q0 11 5 16 Q8 18 11 16 M13 11 L21 19 M21 11 L13 19" strokeWidth="1.3" /></svg>
          Acessibilidade: investigar
        </StatusItem>
        <StatusRight>
          <ViewButton $w={48} $inset={4}>
            <svg width="17" height="14" viewBox="0 0 17 14" fill="none" stroke="#777"><path d="M1 1 H8 V13 H1 Z M9 1 H16 V13 H9 Z M3 4 H6 M3 7 H6 M3 10 H6 M11 4 H14 M11 7 H14 M11 10 H14" /></svg>
          </ViewButton>
          <ViewButton $w={50} $active>
            <svg width="17" height="16" viewBox="0 0 17 16" fill="none" stroke="#777"><path d="M0.5 0.5 H16.5 V15.5 H0.5 Z M3 4 H14 M3 7 H14 M3 10 H14 M3 13 H14" /></svg>
          </ViewButton>
          <ViewButton $w={50}>
            <svg width="18" height="16" viewBox="0 0 18 16" fill="none" stroke="#777"><path d="M1 1 H14 V11 M1 1 V14 H9 M3 4 H12 M3 7 H10 M3 10 H8" /><circle cx="13" cy="11" r="4" fill="#888" stroke="none" /></svg>
          </ViewButton>
          <ViewButton $w={22}><Minus size={10} color="#555" /></ViewButton>
          <ZoomTrack><ZoomTick /><ZoomThumb /></ZoomTrack>
          <ViewButton $w={12}><svg width="10" height="10" viewBox="0 0 10 10"><path d="M5 0 V10 M0 5 H10" stroke="#555" /></svg></ViewButton>
          <ZoomPercent>190%</ZoomPercent>
        </StatusRight>
      </StatusBar>

      <Taskbar $h={50}>
        <StartCell $w={60}>
          <WinLogo size={21} />
        </StartCell>
        <SearchField $w={360} $large>
          <SearchGlass size={21} color="#333" strokeWidth={1.3} />
          Pesquisar
          <SearchArtWrap>
            <SearchArt w={99} />
          </SearchArtWrap>
        </SearchField>
        <AppsGap $w={3} />
        {[...APP_NAMES, 'paint'].map((name) => (
          <AppCell
            key={name}
            $w={62}
            $bar={3}
            $active={name === 'word'}
            $open={['brave', 'explorer', 'snip', 'vscode', 'docker', 'word', 'pdf', 'canary', 'paint'].includes(name)}
          >
            <AppIcon name={name} size={30} />
          </AppCell>
        ))}
        <Tray $w={440}>
          {strip(1480, [
            [1552, 20, <PeopleIcon key="p" />],
            [1597, 18, <ChevronUp key="u" size={22} strokeWidth={1.2} />],
            [1628, 18, <MeetIcon key="m" size={18} />],
            [1657, 20, <ShieldIcon key="s" size={20} />],
            [1687, 20, <BatteryIcon key="b" size={20} />],
            [1718, 20, <WifiIcon key="w" size={20} />],
            [1747, 20, <VolumeIcon key="v" size={20} />],
            [1808, 80, <Clock key="c" $size={13.4} $gap={23}>15:39<br />25/05/2023</Clock>],
            [1881, 32, <NotifyIcon key="n" size={32} />],
          ])}
        </Tray>
      </Taskbar>

      {TIPS.map(([label, x, y, w, faded]) => (
        <KeyTip key={label} $faded={faded} style={{ left: x, top: y, width: w }}>
          {label}
        </KeyTip>
      ))}
    </Window>
  );
}
